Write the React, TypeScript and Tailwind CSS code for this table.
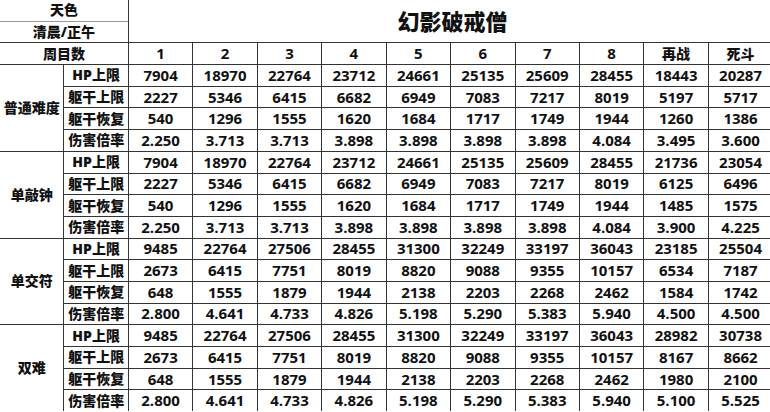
import React from "react";

const cols = ["1", "2", "3", "4", "5", "6", "7", "8", "再战", "死斗"];
const labels = ["HP上限", "躯干上限", "躯干恢复", "伤害倍率"];

const groups: { name: string; rows: string[][] }[] = [
  {
    name: "普通难度",
    rows: [
      ["7904", "18970", "22764", "23712", "24661", "25135", "25609", "28455", "18443", "20287"],
      ["2227", "5346", "6415", "6682", "6949", "7083", "7217", "8019", "5197", "5717"],
      ["540", "1296", "1555", "1620", "1684", "1717", "1749", "1944", "1260", "1386"],
      ["2.250", "3.713", "3.713", "3.898", "3.898", "3.898", "3.898", "4.084", "3.495", "3.600"],
    ],
  },
  {
    name: "单敲钟",
    rows: [
      ["7904", "18970", "22764", "23712", "24661", "25135", "25609", "28455", "21736", "23054"],
      ["2227", "5346", "6415", "6682", "6949", "7083", "7217", "8019", "6125", "6496"],
      ["540", "1296", "1555", "1620", "1684", "1717", "1749", "1944", "1485", "1575"],
      ["2.250", "3.713", "3.713", "3.898", "3.898", "3.898", "3.898", "4.084", "3.900", "4.225"],
    ],
  },
  {
    name: "单交符",
    rows: [
      ["9485", "22764", "27506", "28455", "31300", "32249", "33197", "36043", "23185", "25504"],
      ["2673", "6415", "7751", "8019", "8820", "9088", "9355", "10157", "6534", "7187"],
      ["648", "1555", "1879", "1944", "2138", "2203", "2268", "2462", "1584", "1742"],
      ["2.800", "4.641", "4.733", "4.826", "5.198", "5.290", "5.383", "5.940", "4.500", "4.500"],
    ],
  },
  {
    name: "双难",
    rows: [
      ["9485", "22764", "27506", "28455", "31300", "32249", "33197", "36043", "28982", "30738"],
      ["2673", "6415", "7751", "8019", "8820", "9088", "9355", "10157", "8167", "8662"],
      ["648", "1555", "1879", "1944", "2138", "2203", "2268", "2462", "1980", "2100"],
      ["2.800", "4.641", "4.733", "4.826", "5.198", "5.290", "5.383", "5.940", "5.100", "5.525"],
    ],
  },
];

const base = "bg-white flex items-center justify-center text-[#111] leading-none";
const cjk = `${base} text-[14px] font-extrabold`;
const num = `${base} text-[15px] font-bold`;

export default function App() {
  return (
    <div
      className="w-[770px] h-[412px] overflow-hidden bg-white"
      style={{ fontFamily: '"Open Sans", "Noto Sans CJK SC", sans-serif' }}
    >
      <div className="grid w-[776px] grid-cols-[repeat(12,63.45px)] grid-rows-[repeat(19,20.7px)] gap-px bg-[#333]">
        <div className={`${cjk} col-span-2 bg-[#f8f8f8] border-b border-[#999] mb-[-1px]`}>天色</div>
        <div className={`${base} font-extrabold col-span-10 row-span-2 text-[22px]`}>
          <span className="ml-[4px]">幻影破戒僧</span>
        </div>
        <div className={`${cjk} col-span-2`}>清晨/正午</div>
        <div className={`${cjk} col-span-2`}>周目数</div>
        {cols.map((c) => (
          <div key={c} className={/\d/.test(c) ? num : cjk}>
            {c}
          </div>
        ))}
        {groups.map((g) => (
          <React.Fragment key={g.name}>
            <div className={`${cjk} row-span-4`}>{g.name}</div>
            {g.rows.map((r, i) => (
              <React.Fragment key={i}>
                <div className={cjk}>{labels[i]}</div>
                {r.map((v, j) => (
                  <div key={j} className={num}>
                    {v}
                  </div>
                ))}
              </React.Fragment>
            ))}
          </React.Fragment>
        ))}
      </div>
    </div>
  );
}
